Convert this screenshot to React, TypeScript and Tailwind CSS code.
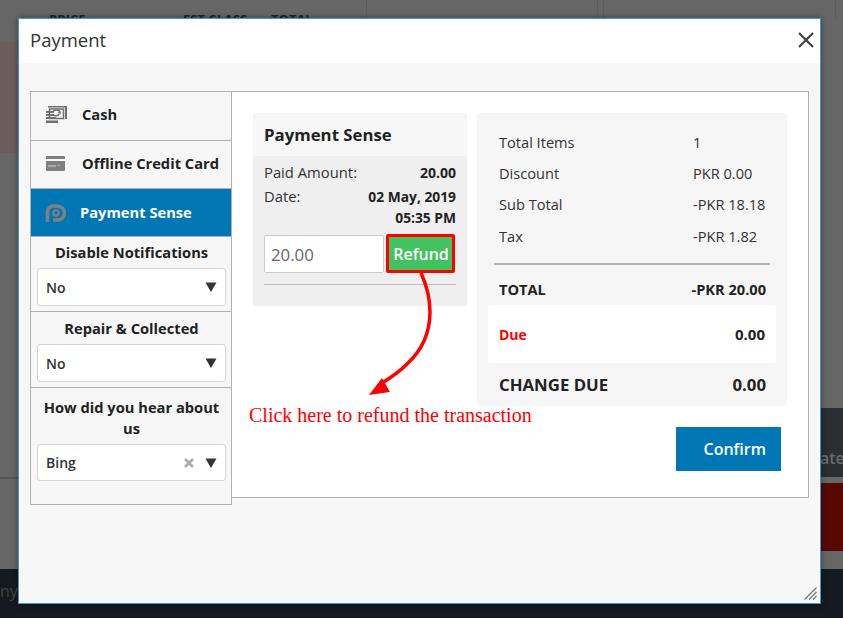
const font = "font-['Open_Sans',sans-serif]";

const Chevron = () => (
  <svg width="12" height="10" viewBox="0 0 12 10" className="shrink-0">
    <path d="M0.5 0.5h11L6 10z" fill="#333" />
  </svg>
);

const CashIcon = () => (
  <svg width="21" height="17" viewBox="0 0 21 17" fill="none" className="shrink-0">
    <path d="M2 0h19v13h-2V1.500H2z" fill="#6f6f6f" />
    <rect x="3.500" y="3" width="14" height="9.500" stroke="#6f6f6f" strokeWidth="1.500" />
    <path d="M7 7a3.500 3 0 0 1 7 0l-1.500-1M13 8a3 2.500 0 0 1-5 1" stroke="#6f6f6f" strokeWidth="1.500" />
    <path d="M0 5h7v2H0zM0 8h8v2H0zM0 11h10v2H0zM0 14.500h12V17H0z" fill="#6f6f6f" />
  </svg>
);

const CardIcon = () => (
  <svg width="19" height="15" viewBox="0 0 19 15" className="shrink-0">
    <path d="M1 0h17a1 1 0 0 1 1 1v2H0V1a1 1 0 0 1 1-1z" fill="#808080" />
    <path d="M0 5h19v9a1 1 0 0 1-1 1H1a1 1 0 0 1-1-1z" fill="#808080" />
    <rect x="2" y="9" width="8" height="2" fill="#a8a8a8" />
    <rect x="11" y="9" width="3" height="1" fill="#a8a8a8" />
  </svg>
);

const SenseIcon = () => (
  <svg width="21" height="18" viewBox="0 0 21 18" fill="none" className="shrink-0">
    <path d="M2.500 18V8a6 6 0 0 1 6-6h4a7 7 0 0 1 0 14H8" stroke="#808080" strokeWidth="3.500" />
    <circle cx="11" cy="9" r="2.700" stroke="#808080" strokeWidth="2" />
  </svg>
);

const SideSelect = ({ value, clear, short }: { value: string; clear?: boolean; short?: boolean }) => (
  <div className={`flex items-center justify-between rounded-[3px] border border-[#d5d5d5] bg-white pl-[8px] pr-[8px] text-[14px] font-semibold text-[#333] ${short ? "h-[37px]" : "h-[38px]"}`}>
    <span>{value}</span>
    <span className="flex items-center gap-[11px]">
      {clear && (
        <svg width="10" height="10" viewBox="0 0 10 10" stroke="#aaa" strokeWidth="2.500">
          <path d="M1 1l8 8M9 1l-8 8" />
        </svg>
      )}
      <Chevron />
    </span>
  </div>
);

const SummaryRow = ({ label, value }: { label: string; value: string }) => (
  <div className="flex h-[31.300px] items-center pl-[22px]">
    <span className="w-[194px]">{label}</span>
    <span>{value}</span>
  </div>
);

export default function App() {
  return (
    <div className={`${font} relative flex h-[618px] w-[843px] flex-col overflow-hidden bg-[#666]`}>
      {/* page behind the dialog */}
      <div className="h-[42px]" />
      <div className="h-[111px] w-[18px] bg-[#6c5c5a]" />
      <div className="h-[324px]" />
      <div className="h-[2px] w-[18px] bg-[#555]" />
      <div className="flex-1" />
      <div className="flex h-[49px] items-center bg-[#141a20] pb-[5px] text-[16px] text-[#444]">
        <span>ny</span>
      </div>
      <div className="absolute left-[49px] top-[10px] flex text-[13px] font-bold leading-[18px] text-[#222]">
        <span className="w-[134px]">PRICE</span>
        <span className="w-[88px]">EST CLASS</span>
        <span>TOTAL</span>
      </div>
      <div className="absolute left-[366px] top-0 h-[18px] w-px bg-[#5c5c5c]" />
      <div className="absolute left-[597px] top-0 h-[18px] w-px bg-[#5c5c5c]" />
      <div className="absolute left-[603px] top-0 h-[18px] w-px bg-[#5c5c5c]" />
      <div className="absolute left-[835px] top-0 h-[18px] w-px bg-[#5c5c5c]" />
      <div className="absolute right-0 top-[408px] h-[69px] w-[22px] overflow-hidden bg-[#2b2e31] pt-[38px] text-[16px] font-semibold leading-[24px] text-[#6a6a6a]">
        <span className="-ml-[1px]">ate</span>
      </div>
      <div className="absolute right-0 top-[483px] h-[68px] w-[22px] bg-[#570800]" />

      {/* dialog */}
      <div className="absolute left-[18px] top-[18px] flex h-[586px] w-[803px] flex-col border border-[#3d9bd0] bg-[#f7f7f7] text-[#222] shadow-[0_0_6px_rgba(0,0,0,0.4)]">
        <div className="flex h-[44px] shrink-0 items-center justify-between bg-white pb-[3px] pl-[11px] pr-[6px]">
          <span className="text-[18.500px] text-[#333]">Payment</span>
          <svg width="16" height="16" viewBox="0 0 16 16" stroke="#444" strokeWidth="2.200">
            <path d="M1 1l14 14M15 1L1 15" />
          </svg>
        </div>

        <div className="ml-[11px] mt-[28px] flex h-[406px] w-[779px]">
          {/* payment methods */}
          <div className="flex h-[414px] w-[202px] shrink-0 flex-col border border-[#b0b0b0] bg-[#f7f7f7]">
            <div className="flex h-[49px] items-center gap-[15px] border-b border-[#b0b0b0] pb-[3px] pl-[15px] text-[14.700px] font-bold">
              <CashIcon />
              <span>Cash</span>
            </div>
            <div className="flex h-[48px] items-center gap-[17px] border-b border-[#b0b0b0] pb-[2px] pl-[15px] text-[14.700px] font-bold">
              <CardIcon />
              <span>Offline Credit Card</span>
            </div>
            <div className="flex h-[47px] items-center gap-[14px] bg-[#0077b5] pl-[14px] text-[14.700px] font-bold text-white">
              <SenseIcon />
              <span>Payment Sense</span>
            </div>
            <div className="flex h-[76px] flex-col border-y border-[#b0b0b0] pl-[6px] pr-[5px] pt-[4px] text-center text-[14.700px] font-bold">
              <div className="mb-[5px]">Disable Notifications</div>
              <SideSelect value="No" />
            </div>
            <div className="flex h-[76px] flex-col border-b border-[#b0b0b0] pl-[6px] pr-[5px] pt-[5px] text-center text-[14.700px] font-bold">
              <div className="mb-[5px]">Repair & Collected</div>
              <SideSelect value="No" />
            </div>
            <div className="pl-[6px] pr-[5px] pt-[9px] text-center text-[14.700px] font-bold leading-[21px]">
              <div className="mb-[5px]">How did you hear about us</div>
              <SideSelect value="Bing" clear short />
            </div>
          </div>

          {/* main panel */}
          <div className="relative flex h-[407px] flex-1 gap-[10px] border border-l-0 border-[#b0b0b0] bg-white pl-[21px] pt-[21px]">
            <div className="h-[193px] w-[214px] shrink-0 bg-[#efefef]">
              <div className="flex h-[43px] items-center bg-[#f7f7f7] px-[11px] text-[16.800px] font-bold">Payment Sense</div>
              <div className="px-[11px] pt-[6px] text-[14px] leading-[21px]">
                <div className="flex h-[23px] justify-between">
                  <span className="text-[14.800px] text-[#333]">Paid Amount:</span>
                  <span className="font-bold">20.00</span>
                </div>
                <div className="flex justify-between pt-[1px]">
                  <span className="text-[14.800px] text-[#333]">Date:</span>
                  <span className="text-right text-[13.800px] font-bold">02 May, 2019<br />05:35 PM</span>
                </div>
                <div className="mt-[6px] flex items-end gap-[2px] border-b border-[#bdbdbd] pb-[11px]">
                  <div className="flex h-[38px] w-[120px] items-center rounded-[2px] border border-[#ccc] bg-white pl-[6px] text-[16.800px] text-[#666]">20.00</div>
                  <div className="flex h-[39px] w-[69px] items-center justify-center rounded-[2px] border-[3px] border-[#ff0000] bg-[#43c25f] pl-[1px] pt-[1px] text-[16px] font-semibold text-white">Refund</div>
                </div>
              </div>
            </div>

            <div className="flex w-[310px] shrink-0 flex-col">
              <div className="h-[293px] rounded-[4px] bg-[#f6f6f6] text-[14.600px] text-[#333]">
                <div className="pt-[14px]">
                  <SummaryRow label="Total Items" value="1" />
                  <SummaryRow label="Discount" value="PKR 0.00" />
                  <SummaryRow label="Sub Total" value="-PKR 18.18" />
                  <SummaryRow label="Tax" value="-PKR 1.82" />
                </div>
                <div className="mx-[17px] mt-[10.800px] h-[2px] bg-[#b5b5b5]" />
                <div className="flex h-[40px] items-center justify-between pl-[22px] pr-[21px] pt-[10px] font-bold text-[#222]">
                  <span>TOTAL</span>
                  <span>-PKR 20.00</span>
                </div>
                <div className="mx-[11px] flex h-[58px] items-center justify-between rounded-[3px] bg-white px-[11px] pt-[1px] font-bold text-[#222]">
                  <span className="text-[14px] text-[#ff0000]">Due</span>
                  <span className="text-[15px]">0.00</span>
                </div>
                <div className="flex h-[44px] items-center justify-between pl-[22px] pr-[21px] text-[16.800px] font-bold text-[#222]">
                  <span>CHANGE DUE</span>
                  <span>0.00</span>
                </div>
              </div>
              <div className="mt-[21px] flex justify-end pr-[6px]">
                <div className="flex h-[44px] w-[105px] items-center justify-end bg-[#0077b5] pr-[15px] text-[16px] font-semibold text-white">Confirm</div>
              </div>
            </div>

            {/* annotation */}
            <svg width="90" height="130" viewBox="0 0 90 130" fill="none" className="absolute left-[120px] top-[180px]">
              <path d="M69 1C75 14 78 26 78 40C78 62 68 80 55 92C47 100 40 105 30 111" stroke="#ff0000" strokeWidth="3.500" />
              <path d="M17 123L30 106L38 120z" fill="#ff0000" />
            </svg>
            <span className="absolute left-[17px] top-[311px] font-['Liberation_Serif',serif] text-[20px] leading-[24px] text-[#ff0000]">Click here to refund the transaction</span>
          </div>
        </div>

        <svg width="13" height="13" viewBox="0 0 13 13" stroke="#777" strokeWidth="1.200" className="absolute bottom-[3px] right-[3px]">
          <path d="M0.500 12.500l12-12M5 12.500l7.500-7.500M9 12.500l3.500-3.500" />
        </svg>
      </div>
    </div>
  );
}
